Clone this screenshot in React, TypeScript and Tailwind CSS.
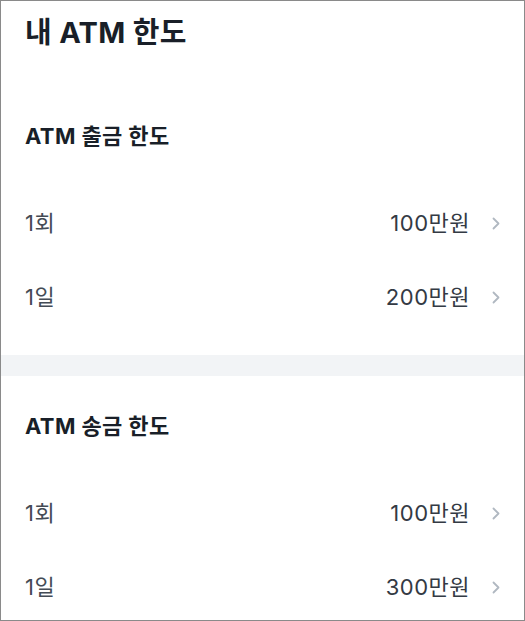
import React from 'react';

type Limit = { label: string; amount: string };

const sections: { title: string; rows: Limit[] }[] = [
  {
    title: 'ATM 출금 한도',
    rows: [
      { label: '1회', amount: '100만원' },
      { label: '1일', amount: '200만원' },
    ],
  },
  {
    title: 'ATM 송금 한도',
    rows: [
      { label: '1회', amount: '100만원' },
      { label: '1일', amount: '300만원' },
    ],
  },
];

function Chevron() {
  return (
    <svg width="8" height="13" viewBox="0 0 8 13" fill="none" className="ml-[22px]">
      <path d="M1.5 1.5L6.5 6.5L1.5 11.5" stroke="#b0b8c1" strokeWidth="1.8" strokeLinecap="round" strokeLinejoin="round" />
    </svg>
  );
}

function LimitRow({ label, amount }: Limit) {
  return (
    <div className="flex items-center justify-between h-[74px] pl-[24px] pr-[24px]">
      <span className="text-[22px] tracking-[0.5px] text-[#444b55]">{label}</span>
      <div className="flex items-center">
        <span className="text-[22px] tracking-[0.5px] text-[#333a44]">{amount}</span>
        <Chevron />
      </div>
    </div>
  );
}

export default function App() {
  return (
    <div
      className="w-[525px] h-[621px] border border-[#8a8a8a] bg-white overflow-hidden"
      style={{ fontFamily: 'Inter, "Noto Sans CJK KR", sans-serif' }}
    >
      <h1 className="px-[24px] pt-[15px] text-[29px] leading-[34px] font-bold text-[#191f28] tracking-[0.3px]">
        내 ATM 한도
      </h1>

      {sections.map((section, i) => (
        <div key={section.title}>
          {i > 0 && <div className="h-[21px] bg-[#f2f4f6]" />}
          <div className={i === 0 ? 'pt-[72px] pb-[21px]' : 'pt-[36px]'}>
            <h2 className="px-[24px] text-[22px] leading-[28px] font-bold text-[#191f28] tracking-[0.4px] mb-[36px]">
              {section.title}
            </h2>
            {section.rows.map((row) => (
              <LimitRow key={row.label} {...row} />
            ))}
          </div>
        </div>
      ))}
    </div>
  );
}
